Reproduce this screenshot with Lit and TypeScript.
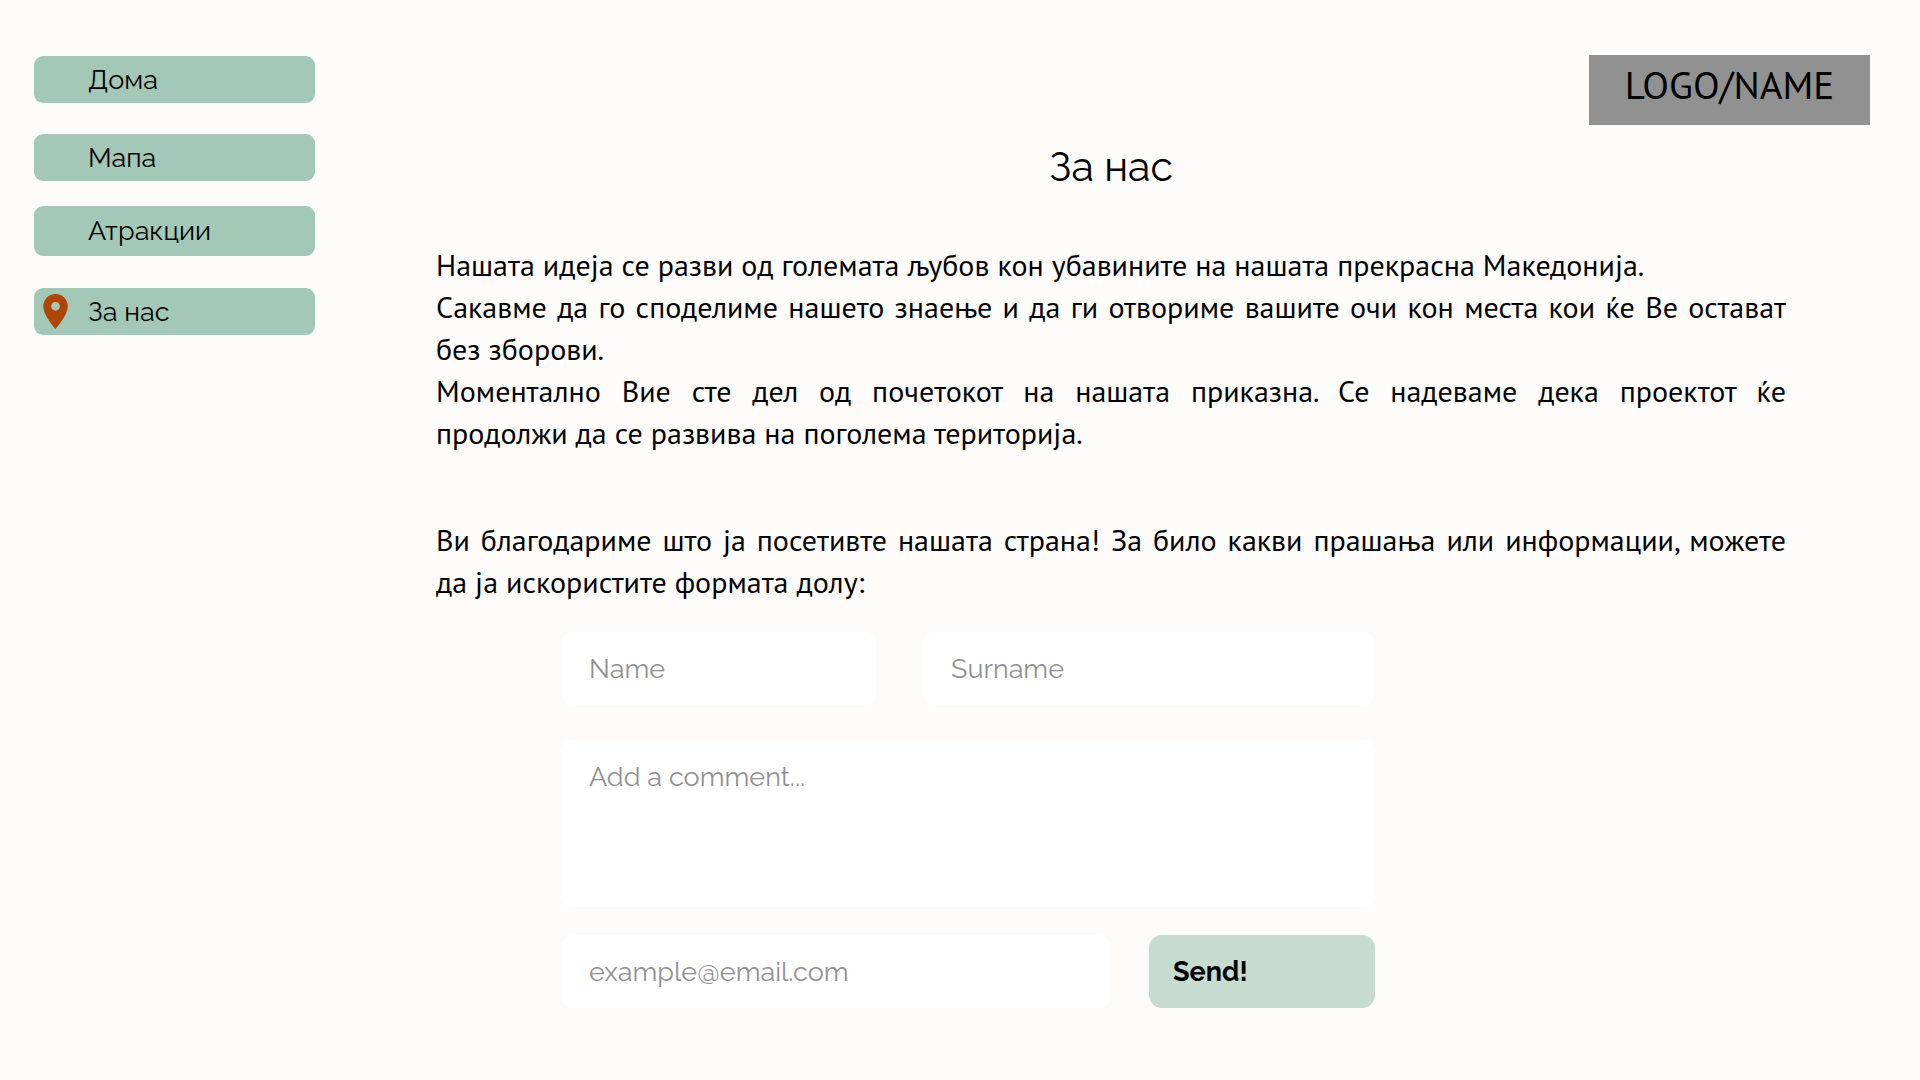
import { LitElement, html, css, nothing } from "lit";
import { customElement, property } from "lit/decorators.js";

interface NavEntry {
  label: string;
  href: string;
}

const NAV: NavEntry[] = [
  { label: "Дома", href: "#home" },
  { label: "Мапа", href: "#map" },
  { label: "Атракции", href: "#attractions" },
  { label: "За нас", href: "#about" },
];

@customElement("side-nav")
export class SideNav extends LitElement {
  @property() current = "";

  static styles = css`
    :host {
      display: block;
    }
    .list {
      list-style: none;
      margin: 0;
      padding: 0;
      display: grid;
      grid-template-rows: 78px 72px 82px 47px;
    }
    .item {
      display: flex;
      align-items: flex-start;
    }
    .link {
      box-sizing: border-box;
      display: flex;
      align-items: center;
      gap: 20px;
      width: 100%;
      height: 47px;
      padding-left: 8px;
      border-radius: 9px;
      background: #a4c8b7;
      color: #000;
      font: 27px/32px Raleway, Lato, sans-serif;
      text-decoration: none;
    }
    .item:nth-child(3) .link {
      height: 50px;
    }
    .marker {
      display: flex;
      flex: none;
      width: 26px;
      justify-content: center;
    }
    .pin {
      width: 25px;
      height: 35px;
      fill: #ae4607;
    }
  `;

  render() {
    return html`
      <nav>
        <ul class="list">
          ${NAV.map(
            (entry) => html`
              <li class="item">
                <a
                  class="link"
                  href=${entry.href}
                  aria-current=${entry.href === this.current ? "page" : nothing}
                >
                  <span class="marker">
                    ${entry.href === this.current
                      ? html`<svg class="pin" viewBox="5 2 14 20" aria-hidden="true">
                          <path
                            d="M12 2C8.13 2 5 5.13 5 9c0 5.25 7 13 7 13s7-7.75 7-13c0-3.87-3.13-7-7-7zm0 9.5a2.5 2.5 0 0 1 0-5 2.5 2.5 0 0 1 0 5z"
                          />
                        </svg>`
                      : nothing}
                  </span>
                  <span>${entry.label}</span>
                </a>
              </li>
            `
          )}
        </ul>
      </nav>
    `;
  }
}

@customElement("contact-form")
export class ContactForm extends LitElement {
  static styles = css`
    :host {
      display: block;
    }
    .form {
      display: flex;
      flex-direction: column;
    }
    .row {
      display: grid;
    }
    .names {
      grid-template-columns: 315fr 452fr;
      gap: 47px;
      margin-bottom: 35px;
    }
    .submit {
      grid-template-columns: 550fr 226fr;
      gap: 38px;
      margin-top: 28px;
    }
    .field,
    .send {
      box-sizing: border-box;
      width: 100%;
      min-width: 0;
      height: 73px;
      margin: 0;
      padding: 0 28px;
      border: 0;
      border-radius: 13px;
      background: #fff;
      color: #000;
      font: 27px/32px Raleway, Lato, sans-serif;
    }
    .field::placeholder {
      color: #919191;
      opacity: 1;
    }
    .comment {
      display: block;
      height: 167px;
      padding-top: 21px;
      resize: none;
    }
    .send {
      padding: 0 24px;
      background: #c7dcd1;
      font-weight: 700;
      text-align: left;
      cursor: pointer;
    }
  `;

  render() {
    return html`
      <form class="form" @submit=${(e: Event) => e.preventDefault()}>
        <div class="row names">
          <input class="field" type="text" name="name" placeholder="Name" aria-label="Name" />
          <input class="field" type="text" name="surname" placeholder="Surname" aria-label="Surname" />
        </div>
        <textarea
          class="field comment"
          name="comment"
          placeholder="Add a comment..."
          aria-label="Add a comment"
        ></textarea>
        <div class="row submit">
          <input
            class="field"
            type="email"
            name="email"
            placeholder="example@email.com"
            aria-label="Email"
          />
          <button class="send" type="submit">Send!</button>
        </div>
      </form>
    `;
  }
}

@customElement("app-root")
export class AppRoot extends LitElement {
  static styles = css`
    :host {
      display: block;
      box-sizing: border-box;
      min-height: 100vh;
      background: #fdfcfa;
      color: #000;
    }
    .page {
      display: grid;
      grid-template-columns: 281px minmax(0, 1fr);
      column-gap: 121px;
      padding: 55px 50px 32px 34px;
    }
    .side {
      padding-top: 1px;
    }
    .header {
      display: flex;
      justify-content: flex-end;
    }
    .logo {
      box-sizing: border-box;
      width: 281px;
      padding: 4px 0 14px;
      background: #919191;
      font: 39px/52px "PT Sans", "Noto Sans", sans-serif;
      text-align: center;
    }
    .content {
      padding-right: 84px;
    }
    .title {
      margin: 18px 0 53px;
      font: 400 41px/48px Raleway, Lato, sans-serif;
      text-align: center;
    }
    .text {
      margin: 0;
      font: 30px/42px "PT Sans", "Noto Sans", sans-serif;
      text-align: justify;
    }
    .closing {
      margin-top: 65px;
    }
    .contact {
      max-width: 814px;
      margin: 29px 0 0 125px;
    }
  `;

  render() {
    return html`
      <div class="page">
        <side-nav class="side" current="#about"></side-nav>
        <div>
          <header class="header"><div class="logo">LOGO/NAME</div></header>
          <main class="content">
            <h1 class="title">За нас</h1>
            <p class="text">Нашата идеја се разви од големата љубов кон убавините на нашата прекрасна Македонија.</p>
            <p class="text">Сакавме да го споделиме нашето знаење и да ги отвориме вашите очи кон места кои ќе Ве остават без зборови.</p>
            <p class="text">Моментално Вие сте дел од почетокот на нашата приказна. Се надеваме дека проектот ќе продолжи&nbsp;да се развива на поголема територија.</p>
            <p class="text closing">Ви благодариме што ја посетивте нашата страна! За било какви прашања или информации, можете да ја искористите формата долу:</p>
            <contact-form class="contact"></contact-form>
          </main>
        </div>
      </div>
    `;
  }
}
